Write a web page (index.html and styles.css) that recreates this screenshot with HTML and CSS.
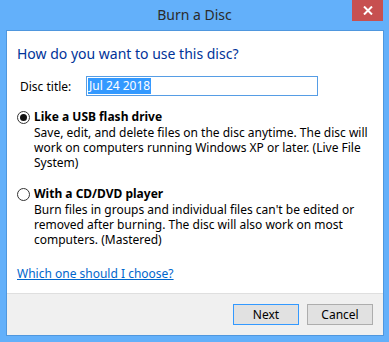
FILE: index.html
```html
<!DOCTYPE html>
<html lang="en">
<head>
    <meta charset="UTF-8">
    <meta name="viewport" content="width=device-width, initial-scale=1.0">
    <title>Burn a Disc</title>
    <link rel="stylesheet" href="styles.css">
</head>
<body>
    <div class="window">
        <div class="titlebar">
            <span class="title">Burn a Disc</span>
            <button class="close" aria-label="Close">
                <svg width="10" height="9" viewBox="0 0 10 9">
                    <path d="M1 0.5 L9 8.5 M9 0.5 L1 8.5" stroke="#fff" stroke-width="2"/>
                </svg>
            </button>
        </div>

        <div class="dialog">
            <div class="content">
                <h1>How do you want to use this disc?</h1>

                <div class="title-row">
                    <label for="discTitle">Disc title:</label>
                    <div class="field"><span class="selected">Jul 24 2018</span></div>
                </div>

                <div class="option">
                    <div class="option-head">
                        <span class="radio checked"></span>
                        <span class="option-label">Like a USB flash drive</span>
                    </div>
                    <p>Save, edit, and delete files on the disc anytime. The disc will work on computers running Windows XP or later. (Live File System)</p>
                </div>

                <div class="option">
                    <div class="option-head">
                        <span class="radio"></span>
                        <span class="option-label">With a CD/DVD player</span>
                    </div>
                    <p>Burn files in groups and individual files can't be edited or removed after burning. The disc will also work on most computers. (Mastered)</p>
                </div>

                <a class="help" href="#">Which one should I choose?</a>
            </div>

            <div class="footer">
                <button class="btn default">Next</button>
                <button class="btn">Cancel</button>
            </div>
        </div>
    </div>
</body>
</html>
```

FILE: styles.css
```css
html, body {
    margin: 0;
    padding: 0;
}

body {
    width: 389px;
    height: 342px;
    background-color: #63b0fa;
    font-family: 'Noto Sans', 'Open Sans', sans-serif;
    font-size: 12px;
    color: #000;
    overflow: hidden;
}

.titlebar {
    height: 30px;
    display: grid;
    grid-template-columns: 1fr auto 1fr;
    align-items: start;
}

.title {
    grid-column: 2;
    line-height: 30px;
    font-size: 14px;
    color: #2b2b2b;
}

.close {
    grid-column: 3;
    justify-self: end;
    margin-right: 6px;
    width: 31px;
    height: 21px;
    border: none;
    padding: 0;
    background-color: #c75050;
    display: flex;
    align-items: center;
    justify-content: center;
}

.dialog {
    margin-left: 6px;
    width: 378px;
    height: 306px;
    box-sizing: border-box;
    border: 1px solid #4f97de;
    background-color: #fff;
    display: flex;
    flex-direction: column;
}

.content {
    flex: 1;
    padding: 13px 10px 0 10px;
}

h1 {
    margin: 0;
    font-size: 14px;
    font-weight: 400;
    line-height: 20px;
    color: #003399;
}

.title-row {
    display: flex;
    align-items: center;
    margin-top: 12px;
}

.title-row label {
    width: 66px;
    padding-left: 3px;
}

.field {
    width: 232px;
    height: 20px;
    box-sizing: border-box;
    border: 1px solid #569de5;
    padding: 1px;
    display: flex;
}

.selected {
    background-color: #3399ff;
    color: #fff;
    padding: 0 1px;
    line-height: 16px;
}

.option {
    margin-top: 13px;
}

.option + .option {
    margin-top: 16px;
}

.option-head {
    display: flex;
    align-items: center;
    gap: 4px;
}

.radio {
    width: 11px;
    height: 11px;
    border: 1px solid #333;
    border-radius: 50%;
    background-color: #fff;
    display: flex;
    align-items: center;
    justify-content: center;
}

.radio.checked::after {
    content: "";
    width: 7px;
    height: 7px;
    border-radius: 50%;
    background-color: #111;
}

.option-label {
    font-weight: 700;
    line-height: 16px;
}

.option p {
    margin: 0 0 0 17px;
    line-height: 15px;
}

.help {
    display: inline-block;
    margin-top: 18px;
    color: #0066cc;
}

.footer {
    height: 41px;
    border-top: 1px solid #dfdfdf;
    background-color: #f0f0f0;
    display: flex;
    justify-content: flex-end;
    align-items: center;
    gap: 8px;
    padding-right: 10px;
}

.btn {
    width: 66px;
    height: 21px;
    box-sizing: border-box;
    border: 1px solid #adadad;
    background-color: #e1e1e1;
    font-family: inherit;
    font-size: 12px;
    color: #000;
    padding: 0;
}

.btn.default {
    border-color: #3399ff;
}
```
